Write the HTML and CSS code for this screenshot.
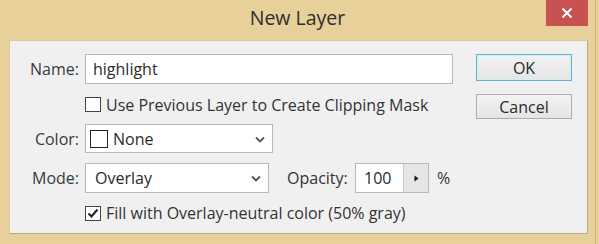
FILE: index.html
```
<!DOCTYPE html>
<html>
<head>
<meta charset="utf-8">
<link rel="stylesheet" href="styles.css">
</head>
<body>
<div class="window">
  <div class="titlebar">
    <div class="title">New Layer</div>
    <div class="close">
      <svg width="12" height="12" viewBox="0 0 12 12"><path d="M1.5 1.5 L10.5 10.5 M10.5 1.5 L1.5 10.5" stroke="#fff" stroke-width="2" fill="none"/></svg>
    </div>
  </div>
  <div class="panel">
    <div class="form">
      <div class="row r1">
        <div class="label">Name:</div>
        <div class="input name">highlight</div>
      </div>
      <div class="row r2">
        <div class="label"></div>
        <div class="check"><span class="box"></span><span>Use Previous Layer to Create Clipping Mask</span></div>
      </div>
      <div class="row r3">
        <div class="label">Color:</div>
        <div class="select color">
          <span class="swatch"></span><span class="val">None</span>
          <svg class="chev" width="10" height="7" viewBox="0 0 10 7"><path d="M1 1.5 L5 5.5 L9 1.5" stroke="#555" stroke-width="1.8" fill="none"/></svg>
        </div>
      </div>
      <div class="row r4">
        <div class="label">Mode:</div>
        <div class="select mode">
          <span class="val">Overlay</span>
          <svg class="chev" width="10" height="7" viewBox="0 0 10 7"><path d="M1 1.5 L5 5.5 L9 1.5" stroke="#555" stroke-width="1.8" fill="none"/></svg>
        </div>
        <div class="oplabel">Opacity:</div>
        <div class="opinput"><span class="opval">100</span><span class="oparrow"><svg width="5" height="7" viewBox="0 0 5 7"><path d="M0.5 0.5 L4.5 3.5 L0.5 6.5 Z" fill="#111"/></svg></span></div>
        <div class="pct">%</div>
      </div>
      <div class="row r5">
        <div class="label"></div>
        <div class="check"><span class="box checked"><svg width="14" height="13" viewBox="0 0 14 13"><path d="M2.5 6.5 L5.5 9.5 L11.5 2.5" stroke="#222" stroke-width="2.2" fill="none"/></svg></span><span>Fill with Overlay-neutral color (50% gray)</span></div>
      </div>
    </div>
    <div class="buttons">
      <div class="btn ok">OK</div>
      <div class="btn cancel">Cancel</div>
    </div>
  </div>
</div>
</body>
</html>
```
FILE: styles.css
```
html, body {
  margin: 0;
  padding: 0;
  background: #e8d09b;
}
body {
  font-family: "Open Sans", "Noto Sans", sans-serif;
  color: #333;
  width: 599px;
  height: 244px;
  overflow: hidden;
}
.window {
  width: 596px;
  height: 244px;
  background: #e8d09b;
  border-right: 1px solid #c9b27c;
  box-sizing: border-box;
}
.titlebar {
  height: 40px;
  display: flex;
  justify-content: center;
  position: relative;
}
.title {
  font-family: "Open Sans", sans-serif;
  font-size: 19.5px;
  color: #2e2e2e;
  margin-top: 4px;
  margin-left: 0px;
}
.close {
  position: absolute;
  left: 546px;
  top: 0;
  width: 42px;
  height: 26px;
  background: #c85250;
  display: flex;
  align-items: center;
  justify-content: center;
}
.panel {
  margin-left: 9px;
  width: 579px;
  height: 194px;
  box-sizing: border-box;
  background: #f0f0f0;
  border: 1px solid #b9a98a;
  border-left-color: #d9c9a2;
  border-top-color: #d9c9a2;
  display: flex;
}
.form {
  display: flex;
  flex-direction: column;
  width: 444px;
}
.row {
  display: flex;
  align-items: center;
  font-size: 16px;
}
.label {
  width: 69px;
  text-align: right;
  margin-right: 6px;
  flex: none;
  color: #3a3a3a;
}
.r1 { margin-top: 13px; height: 30px; }
.r2 { margin-top: 10px; height: 21px; }
.r3 { margin-top: 9px; height: 29px; }
.r4 { margin-top: 10px; height: 30px; }
.r5 { margin-top: 9px; height: 22px; }
.input, .select, .opinput {
  background: #fff;
  border: 1px solid #b8b8b8;
  box-sizing: border-box;
  height: 100%;
  display: flex;
  align-items: center;
}
.name {
  width: 368px;
  padding-left: 7px;
  color: #2a2a2a;
}
.check {
  display: flex;
  align-items: center;
  color: #333;
}
.box {
  width: 16px;
  height: 15px;
  box-sizing: border-box;
  border: 1px solid #444;
  background: #fff;
  margin-right: 5px;
  display: flex;
  align-items: center;
  justify-content: center;
}
.select {
  position: relative;
  color: #2a2a2a;
}
.color { width: 188px; padding-left: 4px; }
.mode { width: 184px; padding-left: 9px; }
.swatch {
  width: 18px;
  height: 18px;
  box-sizing: border-box;
  border: 1px solid #222;
  background: #fff;
  margin-right: 5px;
}
.chev {
  position: absolute;
  right: 7px;
  top: 11px;
}
.oplabel {
  margin-left: 18px;
  width: 68px;
  flex: none;
  color: #333;
}
.opinput {
  width: 74px;
  padding: 0;
  flex: none;
}
.opval {
  width: 47px;
  padding-left: 8px;
  box-sizing: border-box;
  color: #2a2a2a;
}
.oparrow {
  flex: 1;
  height: 100%;
  background: #e6e6e6;
  border-left: 1px solid #c8c8c8;
  display: flex;
  align-items: center;
  justify-content: center;
}
.pct {
  margin-left: 8px;
  color: #333;
}
.buttons {
  display: flex;
  flex-direction: column;
  margin-left: 22px;
  width: 96px;
}
.btn {
  height: 26px;
  box-sizing: border-box;
  border: 1px solid #adadad;
  background: linear-gradient(#f2f2f2, #e5e5e5);
  display: flex;
  align-items: center;
  justify-content: center;
  font-size: 16px;
  color: #2a2a2a;
}
.ok {
  margin-top: 13px;
  height: 27px;
  border-color: #5fb3d3;
  box-shadow: inset 0 0 0 1px #d4eef7;
}
.cancel {
  margin-top: 13px;
  height: 25px;
}
```
